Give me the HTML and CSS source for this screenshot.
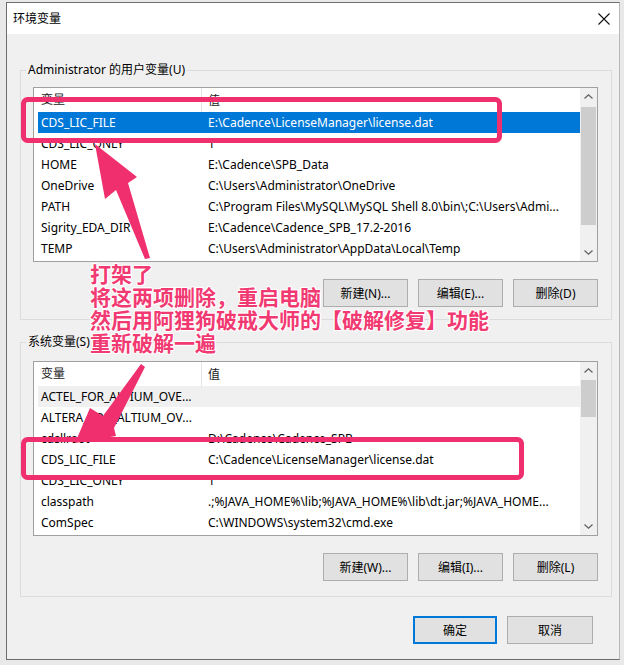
FILE: index.html
```html
<!DOCTYPE html>
<html lang="zh-CN">
<head>
<meta charset="utf-8">
<title>环境变量</title>
<link rel="stylesheet" href="styles.css">
</head>
<body>
<div class="dialog">
  <div class="titlebar">
    <span class="title">环境变量</span>
    <svg class="close" width="12" height="12" viewBox="0 0 12 12"><path d="M0.5 0.5 L11.5 11.5 M11.5 0.5 L0.5 11.5" stroke="#111" stroke-width="1.1" fill="none"/></svg>
  </div>
  <div class="content">
    <fieldset class="group group-user">
      <legend>Administrator 的用户变量(U)</legend>
      <div class="list">
        <div class="list-main">
          <div class="list-head"><div class="c1">变量</div><div class="c2">值</div></div>
          <div class="row selected"><div class="c1">CDS_LIC_FILE</div><div class="c2">E:\Cadence\LicenseManager\license.dat</div></div>
          <div class="row"><div class="c1">CDS_LIC_ONLY</div><div class="c2">1</div></div>
          <div class="row"><div class="c1">HOME</div><div class="c2">E:\Cadence\SPB_Data</div></div>
          <div class="row"><div class="c1">OneDrive</div><div class="c2">C:\Users\Administrator\OneDrive</div></div>
          <div class="row"><div class="c1">PATH</div><div class="c2">C:\Program Files\MySQL\MySQL Shell 8.0\bin\;C:\Users\Admi...</div></div>
          <div class="row"><div class="c1">Sigrity_EDA_DIR</div><div class="c2">E:\Cadence\Cadence_SPB_17.2-2016</div></div>
          <div class="row"><div class="c1">TEMP</div><div class="c2">C:\Users\Administrator\AppData\Local\Temp</div></div>
          <div class="row"><div class="c1">TMP</div><div class="c2">C:\Users\Administrator\AppData\Local\Temp</div></div>
        </div>
        <div class="scrollbar">
          <div class="sb-btn"><svg width="9" height="5" viewBox="0 0 9 5"><path d="M0.5 4.5 L4.5 0.8 L8.5 4.5" stroke="#606060" stroke-width="1.2" fill="none"/></svg></div>
          <div class="sb-track"><div class="sb-thumb thumb-user"></div></div>
          <div class="sb-btn"><svg width="9" height="5" viewBox="0 0 9 5"><path d="M0.5 0.5 L4.5 4.2 L8.5 0.5" stroke="#606060" stroke-width="1.2" fill="none"/></svg></div>
        </div>
      </div>
      <div class="buttons">
        <button class="btn">新建(N)...</button>
        <button class="btn">编辑(E)...</button>
        <button class="btn">删除(D)</button>
      </div>
    </fieldset>

    <fieldset class="group group-sys">
      <legend>系统变量(S)</legend>
      <div class="list">
        <div class="list-main">
          <div class="list-head"><div class="c1">变量</div><div class="c2">值</div></div>
          <div class="row inactive"><div class="c1">ACTEL_FOR_ALTIUM_OVE...</div><div class="c2"></div></div>
          <div class="row"><div class="c1">ALTERA_FOR_ALTIUM_OV...</div><div class="c2"></div></div>
          <div class="row"><div class="c1">cdsllroot</div><div class="c2">D:\Cadence\Cadence_SPB</div></div>
          <div class="row"><div class="c1">CDS_LIC_FILE</div><div class="c2">C:\Cadence\LicenseManager\license.dat</div></div>
          <div class="row"><div class="c1">CDS_LIC_ONLY</div><div class="c2">1</div></div>
          <div class="row"><div class="c1">classpath</div><div class="c2">.;%JAVA_HOME%\lib;%JAVA_HOME%\lib\dt.jar;%JAVA_HOME...</div></div>
          <div class="row"><div class="c1">ComSpec</div><div class="c2">C:\WINDOWS\system32\cmd.exe</div></div>
          <div class="row"><div class="c1">configsetroot</div><div class="c2">C:\WINDOWS\ConfigSetRoot</div></div>
        </div>
        <div class="scrollbar">
          <div class="sb-btn"><svg width="9" height="5" viewBox="0 0 9 5"><path d="M0.5 4.5 L4.5 0.8 L8.5 4.5" stroke="#606060" stroke-width="1.2" fill="none"/></svg></div>
          <div class="sb-track"><div class="sb-thumb thumb-sys"></div></div>
          <div class="sb-btn"><svg width="9" height="5" viewBox="0 0 9 5"><path d="M0.5 0.5 L4.5 4.2 L8.5 0.5" stroke="#606060" stroke-width="1.2" fill="none"/></svg></div>
        </div>
      </div>
      <div class="buttons">
        <button class="btn">新建(W)...</button>
        <button class="btn">编辑(I)...</button>
        <button class="btn">删除(L)</button>
      </div>
    </fieldset>

    <div class="dialog-buttons">
      <button class="btn btn-ok">确定</button>
      <button class="btn btn-cancel">取消</button>
    </div>
  </div>
</div>

<div class="overlay">
  <svg class="marks" width="624" height="665" viewBox="0 0 624 665">
    <rect x="23.5" y="99.5" width="476" height="41" rx="4" fill="none" stroke="#f0306e" stroke-width="5"/>
    <rect x="23.5" y="439.5" width="498" height="38" rx="4" fill="none" stroke="#f0306e" stroke-width="5"/>
    <polygon points="95,144 137,177 128,183 150,258 145,259 116,190 105,199" fill="#f0306e"/>
    <polygon points="75,443 90,408 103,416 141,364 145,367 114,428 116,436" fill="#f0306e"/>
  </svg>
  <div class="note">打架了<br>将这两项删除，重启电脑<br>然后用阿狸狗破戒大师的【破解修复】功能<br>重新破解一遍</div>
</div>
</body>
</html>
```

FILE: styles.css
```css
* { box-sizing: border-box; }

body {
  margin: 0;
  padding: 2px 0 0 6px;
  width: 624px;
  height: 665px;
  overflow: hidden;
  position: relative;
  background: #e9e9e9;
  font-family: "Noto Sans", "Noto Sans CJK SC", sans-serif;
  font-size: 12px;
  color: #000;
}

.dialog {
  width: 614px;
  height: 658px;
  border: 1px solid #6d6d6d;
  border-right-color: #b8b8b8;
  background: #f0f0f0;
  display: flex;
  flex-direction: column;
}

.titlebar {
  height: 31px;
  background: #fff;
  display: flex;
  align-items: center;
  justify-content: space-between;
  padding: 0 9px 0 6px;
  flex: none;
}

.title { font-size: 12px; line-height: 16px; }

.close { display: block; }

.content {
  flex: 1;
  padding: 0 0 0 13px;
}

.group {
  margin: 0;
  width: 592px;
  min-width: 0;
  border: 1px solid #dcdcdc;
}

.group legend {
  padding: 0 2px;
  margin-left: -7px;
  line-height: 16px;
  font-size: 12px;
}

.group-user {
  margin-top: 28px;
  padding: 9px 13px 12px 12px;
}

.group-sys {
  margin-top: 14px;
  padding: 11px 13px 15px 12px;
}

.list {
  height: 175px;
  border: 1px solid #a0a0a0;
  background: #fff;
  display: flex;
}

.list-main {
  flex: 1;
  min-width: 0;
  overflow: hidden;
}

.list-head {
  height: 24px;
  display: grid;
  grid-template-columns: 168px 1fr;
  align-items: center;
  color: #1a1a1a;
}

.list-head .c1 {
  padding-left: 7px;
  height: 24px;
  line-height: 24px;
  border-right: 1px solid #e5e5e5;
}

.list-head .c2 { padding-left: 6px; }

.row {
  height: 21px;
  margin-left: 4px;
  display: grid;
  grid-template-columns: 164px 1fr;
  align-items: center;
  white-space: nowrap;
}

.row .c1 { padding-left: 3px; overflow: hidden; }
.row .c2 { padding-left: 6px; overflow: hidden; }

.row.selected { background: #0078d7; color: #fff; }
.row.inactive { background: #f0f0f0; }

.scrollbar {
  width: 17px;
  flex: none;
  display: flex;
  flex-direction: column;
  background: #f0f0f0;
}

.sb-btn {
  height: 17px;
  flex: none;
  display: flex;
  align-items: center;
  justify-content: center;
}

.sb-track { flex: 1; padding: 0 1px; }

.sb-thumb { background: #cdcdcd; }
.thumb-user { margin-top: 2px; height: 118px; }
.thumb-sys { margin-top: 1px; height: 37px; }

.buttons {
  display: flex;
  justify-content: flex-end;
  gap: 10px;
  margin-top: 17px;
}

.btn {
  width: 85px;
  height: 28px;
  border: 1px solid #adadad;
  background: #e1e1e1;
  font-family: "Noto Sans", "Noto Sans CJK SC", sans-serif;
  font-size: 12px;
  color: #000;
  padding: 0;
}

.dialog-buttons {
  display: flex;
  justify-content: flex-end;
  gap: 10px;
  margin-top: 19px;
  padding-right: 26px;
}

.btn-ok {
  width: 84px;
  border-color: #0078d7;
  box-shadow: inset 0 0 0 1px #0078d7;
}

.btn-cancel { width: 86px; }

.overlay {
  position: absolute;
  left: 0;
  top: 0;
  width: 624px;
  height: 665px;
  pointer-events: none;
}

.marks { position: absolute; left: 0; top: 0; }

.note {
  position: absolute;
  left: 90px;
  top: 262px;
  font-family: "Noto Sans CJK SC", sans-serif;
  font-weight: bold;
  font-size: 21px;
  line-height: 23px;
  color: #f23a72;
  white-space: nowrap;
  text-shadow:
    1px 0 0 #fff, -1px 0 0 #fff, 0 1px 0 #fff, 0 -1px 0 #fff,
    1px 1px 0 #fff, -1px -1px 0 #fff, 1px -1px 0 #fff, -1px 1px 0 #fff;
}
```
